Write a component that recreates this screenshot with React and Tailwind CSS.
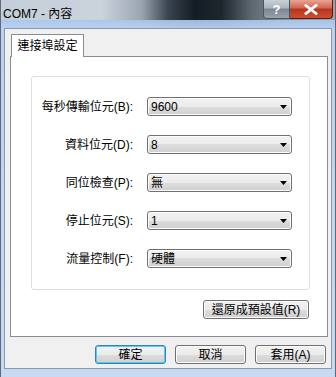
import React from "react";

const font = { fontFamily: '"Liberation Sans","Noto Sans CJK TC",sans-serif' };

function Arrow() {
  return (
    <svg width="7" height="4" viewBox="0 0 7 4" className="block">
      <polygon points="0,0 7,0 3.5,4" fill="#000" />
    </svg>
  );
}

function Combo({ value }) {
  return (
    <div className="flex h-[19px] w-[145px] items-center justify-between rounded-[3px] border border-[#707070] bg-[linear-gradient(to_bottom,#f2f2f2_0%,#ebebeb_50%,#dddddd_50%,#cfcfcf_100%)] pl-[3px] pr-[4px] shadow-[inset_0_0_0_1px_#fcfcfc]">
      <span className="text-[12px] leading-none text-black">{value}</span>
      <Arrow />
    </div>
  );
}

function Btn({ children, w = "w-[71px]", def = false }) {
  return (
    <div
      className={`flex h-[19px] ${w} items-center justify-center rounded-[3px] border ${
        def
          ? "border-[#3c7fb1] shadow-[inset_0_0_0_1px_#48d1ff]"
          : "border-[#707070] shadow-[inset_0_0_0_1px_#fcfcfc]"
      } bg-[linear-gradient(to_bottom,#f2f2f2_0%,#ebebeb_50%,#dddddd_50%,#cfcfcf_100%)] text-[12px] leading-none text-black`}
    >
      {children}
    </div>
  );
}

const rows = [
  ["每秒傳輸位元(B):", "9600"],
  ["資料位元(D):", "8"],
  ["同位檢查(P):", "無"],
  ["停止位元(S):", "1"],
  ["流量控制(F):", "硬體"],
];

export default function App() {
  return (
    <div
      style={font}
      className="flex h-[377px] w-[336px] flex-col overflow-hidden border-x border-[#5e6a78] bg-[linear-gradient(to_bottom,#b9d1ef,#c6daf2)]"
    >
      {/* Title bar */}
      <div className="flex h-[28px] shrink-0 items-start bg-[linear-gradient(to_bottom,transparent_0%,transparent_70%,rgba(168,198,238,0.92)_72%,rgba(185,210,240,0.95)_100%),linear-gradient(to_right,#c4ced9_0%,#cbd3dc_30%,#9aa5b0_42%,#3a4550_50%,#141c25_58%,#1e262e_66%,#5d6770_75%,#8a949d_85%,#9aa3ab_100%)]">
        <div className="pl-[2px] pt-[7px] text-[12px] leading-[14px] text-black">COM7 - 內容</div>
        <div className="ml-auto mr-[2px] flex">
          <div className="flex h-[19px] w-[27px] items-center justify-center rounded-bl-[4px] border border-t-0 border-[#4b5560] bg-[linear-gradient(to_bottom,#c9d0d7_0%,#aab4be_45%,#7d8792_50%,#98a2ac_100%)] text-[13px] font-bold leading-none text-white">
            ?
          </div>
          <div className="flex h-[19px] w-[43px] items-center justify-center rounded-br-[4px] border border-l-0 border-t-0 border-[#5a1a12] bg-[linear-gradient(to_bottom,#e8a493_0%,#d0654f_45%,#b8341e_50%,#c9502f_100%)]">
            <svg width="14" height="11" viewBox="0 0 14 11">
              <path d="M2 1.5 L12 9.5 M12 1.5 L2 9.5" stroke="#fff" strokeWidth="2.8" strokeLinecap="square" />
            </svg>
          </div>
        </div>
      </div>

      {/* Body */}
      <div className="mx-[3px] flex flex-1 flex-col border border-[#8a99ab] bg-[#f0f0f0] px-[5px] pt-[5px]">
        {/* Tab */}
        <div className="relative z-10 -mb-px ml-[1px] flex h-[23px] w-[73px] items-center justify-center border border-b-0 border-[#898c95] bg-white text-[12px] leading-none text-black">
          連接埠設定
        </div>
        {/* Panel */}
        <div className="flex h-[281px] w-[318px] flex-col border border-[#898c95] bg-white pl-[20px] pt-[19px]">
          <div className="flex h-[214px] w-[279px] flex-col gap-[19px] rounded-[3px] border border-[#d5dfe5] pt-[20px]">
            {rows.map(([label, value]) => (
              <div key={label} className="flex items-center">
                <div className="w-[101px] text-right text-[12px] leading-none text-black">{label}</div>
                <div className="ml-[14px]">
                  <Combo value={value} />
                </div>
              </div>
            ))}
          </div>
          <div className="mt-[10px] flex justify-end pr-[18px]">
            <Btn w="w-[106px]">還原成預設值(R)</Btn>
          </div>
        </div>
        {/* Bottom buttons */}
        <div className="mt-[8px] flex justify-end gap-[9px] pr-[0px]">
          <Btn def>確定</Btn>
          <Btn>取消</Btn>
          <Btn>套用(A)</Btn>
        </div>
      </div>
      <div className="h-[8px] shrink-0" />
    </div>
  );
}
